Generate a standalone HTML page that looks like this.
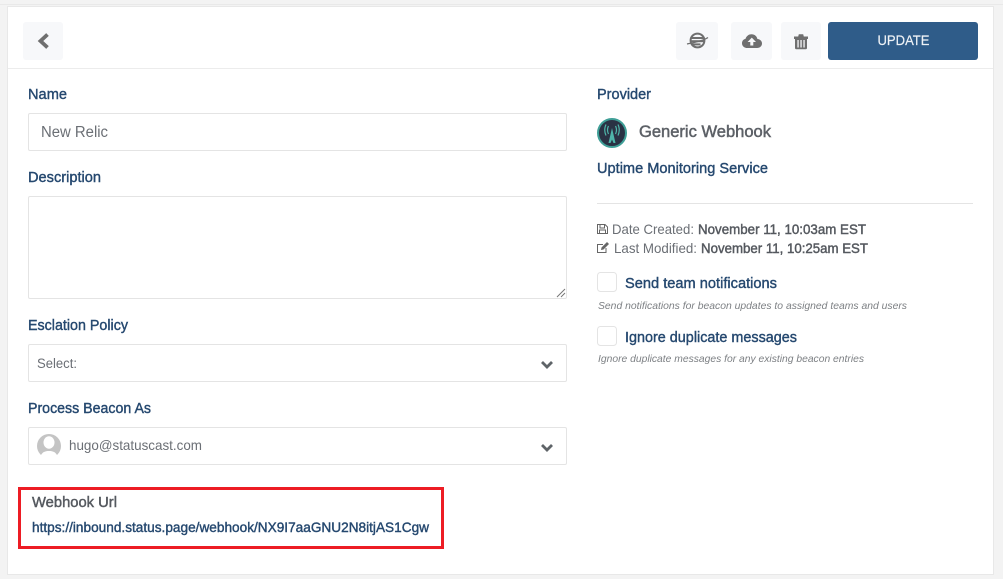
<!DOCTYPE html>
<html><head><meta charset="utf-8">
<style>
html,body{margin:0;padding:0;width:1003px;height:579px;overflow:hidden;background:#f3f3f3}
svg{display:block}
text{font-family:"Liberation Sans",sans-serif;white-space:pre}
.l{fill:#25486f;font-size:15px;stroke:#25486f;stroke-width:.4px}
.g{fill:#6b6f75;font-size:14px}
.b{fill:#55595f;font-size:14px;stroke:#55595f;stroke-width:.45px}
.s{fill:#7d8084;font-size:10.500px;font-style:italic}
.box{fill:#fff;stroke:#e4e4e4;stroke-width:1}
.ib{fill:#f7f8fa}
</style></head>
<body>
<svg width="1003" height="579" viewBox="0 0 1003 579" xmlns="http://www.w3.org/2000/svg">
<rect x="0" y="0" width="1003" height="579" fill="#f3f3f3"/>
<rect x="0" y="4" width="1003" height="1" fill="#e9e9e9"/>
<rect x="7.500" y="6.500" width="986" height="568" fill="#fff" stroke="#e8e8e8"/>
<rect x="8" y="68" width="985" height="1" fill="#ececec"/>

<rect class="ib" x="23" y="22" width="40" height="38" rx="3"/>
<path d="M47.500 34.500 L40.500 41 L47.500 47.500" fill="none" stroke="#6f6f6f" stroke-width="3.800"/>

<rect class="ib" x="676" y="22" width="42" height="38" rx="3"/>
<circle cx="697.500" cy="40.500" r="6.900" fill="none" stroke="#6f6f6f" stroke-width="2"/>
<path d="M687 44 C692 43 703 41 708 37.500" fill="none" stroke="#6f6f6f" stroke-width="1.300"/>
<rect x="691.500" y="37" width="12" height="2" fill="#6f6f6f"/>
<rect x="691.500" y="40.200" width="12" height="2" fill="#6f6f6f"/>
<rect x="691.500" y="43.400" width="9" height="2" fill="#6f6f6f"/>

<rect class="ib" x="731" y="22" width="41" height="38" rx="3"/>
<path d="M747.500 48 C744 48 742 45.800 742 43.200 C742 40.800 743.500 39.200 745.600 38.700 C746.400 36 748.800 34.300 751.500 34.300 C754.600 34.300 756.900 36.300 757.400 39 C760 39.200 762 41 762 43.400 C762 46 760 48 757 48 Z" fill="#6f6f6f"/>
<path d="M751.800 37.600 L756 42 L753.300 42 L753.300 45.500 L750.300 45.500 L750.300 42 L747.600 42 Z" fill="#f7f8fa"/>

<rect class="ib" x="781" y="22" width="40" height="38" rx="3"/>
<path d="M794 36.500 H808 V39 H807 V48 Q807 49.200 806 49.200 H796 Q795 49.200 795 48 V39 H794 Z M798.200 36.500 L798.800 34.200 H803.200 L803.800 36.500 Z" fill="#6f6f6f"/>
<rect x="797.400" y="40" width="1.300" height="7.500" fill="#f7f8fa"/>
<rect x="800.400" y="40" width="1.300" height="7.500" fill="#f7f8fa"/>
<rect x="803.400" y="40" width="1.300" height="7.500" fill="#f7f8fa"/>

<rect x="828" y="22" width="150" height="38" rx="3" fill="#2f5c89"/>
<text x="877.500" y="45" fill="#eef2f6" stroke="#eef2f6" stroke-width=".2" font-size="13.500" textLength="52" lengthAdjust="spacingAndGlyphs">UPDATE</text>

<!-- left column -->
<text class="l" x="28" y="99" textLength="39" lengthAdjust="spacingAndGlyphs">Name</text>
<rect class="box" x="28.500" y="113.500" width="538" height="37" rx="1.500"/>
<text x="41" y="137" fill="#6b6f75" font-size="15.500" textLength="67" lengthAdjust="spacingAndGlyphs">New Relic</text>

<text class="l" x="28" y="182" textLength="73" lengthAdjust="spacingAndGlyphs">Description</text>
<rect class="box" x="28.500" y="196.500" width="538" height="102" rx="1.500"/>
<path d="M557 297 L565 289 M561 297 L565 293" stroke="#777" stroke-width="1" fill="none"/>

<text class="l" x="28" y="330" textLength="100" lengthAdjust="spacingAndGlyphs">Esclation Policy</text>
<rect class="box" x="28.500" y="344.500" width="538" height="37" rx="1.500"/>
<text class="g" x="37" y="368" style="font-size:13.500px" textLength="40" lengthAdjust="spacingAndGlyphs">Select:</text>
<path d="M542 362 L547 367 L552 362" fill="none" stroke="#5f6468" stroke-width="2.800"/>

<text class="l" x="28" y="413" textLength="123" lengthAdjust="spacingAndGlyphs">Process Beacon As</text>
<rect class="box" x="28.500" y="427.500" width="538" height="37" rx="1.500"/>
<circle cx="49" cy="446" r="12" fill="#c4c4c4"/>
<ellipse cx="49" cy="442.500" rx="5.500" ry="6.200" fill="#fff"/>
<path d="M40 457 C42 452 45 451 49 451 C53 451 56 452 58 457 C55 459 43 459 40 457 Z" fill="#fff"/>
<text class="g" x="69" y="450" style="font-size:14px" textLength="133" lengthAdjust="spacingAndGlyphs">hugo@statuscast.com</text>
<path d="M542 445 L547 450 L552 445" fill="none" stroke="#5f6468" stroke-width="2.800"/>

<rect x="19.500" y="488.500" width="423" height="59" fill="none" stroke="#ed1c24" stroke-width="3"/>
<text x="32" y="507" fill="#55595f" stroke="#55595f" stroke-width=".45" font-size="15" textLength="85" lengthAdjust="spacingAndGlyphs">Webhook Url</text>
<text class="l" x="32" y="532" style="font-size:14px" textLength="397" lengthAdjust="spacingAndGlyphs">https://inbound.status.page/webhook/NX9I7aaGNU2N8itjAS1Cgw</text>

<!-- right column -->
<text class="l" x="597" y="99" textLength="54" lengthAdjust="spacingAndGlyphs">Provider</text>
<circle cx="612" cy="133" r="14" fill="#2a3244" stroke="#3f9f97" stroke-width="2"/>
<path d="M612 128 L608.500 143 H610.500 L612 139.500 L613.500 143 H615.500 Z" fill="#4fb5aa"/>
<path d="M608.500 126 Q606.500 130 608.500 134 M615.500 126 Q617.500 130 615.500 134 M606 124.500 Q603.500 130 606 135.500 M618 124.500 Q620.500 130 618 135.500" fill="none" stroke="#4fb5aa" stroke-width="1.200"/>
<text x="639" y="137" fill="#5d6167" stroke="#5d6167" stroke-width=".5" font-size="16.500" textLength="132" lengthAdjust="spacingAndGlyphs">Generic Webhook</text>
<text class="l" x="597" y="173" textLength="171" lengthAdjust="spacingAndGlyphs">Uptime Monitoring Service</text>
<rect x="597" y="203" width="376" height="1" fill="#e4e4e4"/>

<path d="M597.500 224.500 H605 L607.500 227 V233.500 H597.500 Z M600 224.500 V228 H604.500 V224.500 M599.500 233.500 V230 H605.500 V233.500" fill="none" stroke="#666" stroke-width="1"/>
<text class="g" x="612" y="234" textLength="82" lengthAdjust="spacingAndGlyphs">Date Created:</text>
<text class="b" x="698" y="234" textLength="168" lengthAdjust="spacingAndGlyphs">November 11, 10:03am EST</text>

<path d="M606 248 V252.500 H597.500 V244.500 H603" fill="none" stroke="#666" stroke-width="1"/>
<path d="M601 250 L601.500 247.500 L607 242 L609 244 L603.500 249.500 Z" fill="#666"/>
<text class="g" x="614" y="253" textLength="83" lengthAdjust="spacingAndGlyphs">Last Modified:</text>
<text class="b" x="701" y="253" textLength="167" lengthAdjust="spacingAndGlyphs">November 11, 10:25am EST</text>

<rect class="box" x="597.500" y="272.500" width="19" height="19" rx="3"/>
<text class="l" x="625" y="288" textLength="152" lengthAdjust="spacingAndGlyphs">Send team notifications</text>
<text class="s" x="598" y="309" textLength="309" lengthAdjust="spacingAndGlyphs">Send notifications for beacon updates to assigned teams and users</text>

<rect class="box" x="597.500" y="326.500" width="19" height="19" rx="3"/>
<text class="l" x="625" y="342" textLength="172" lengthAdjust="spacingAndGlyphs">Ignore duplicate messages</text>
<text class="s" x="598" y="362" textLength="266" lengthAdjust="spacingAndGlyphs">Ignore duplicate messages for any existing beacon entries</text>
</svg>
</body></html>
